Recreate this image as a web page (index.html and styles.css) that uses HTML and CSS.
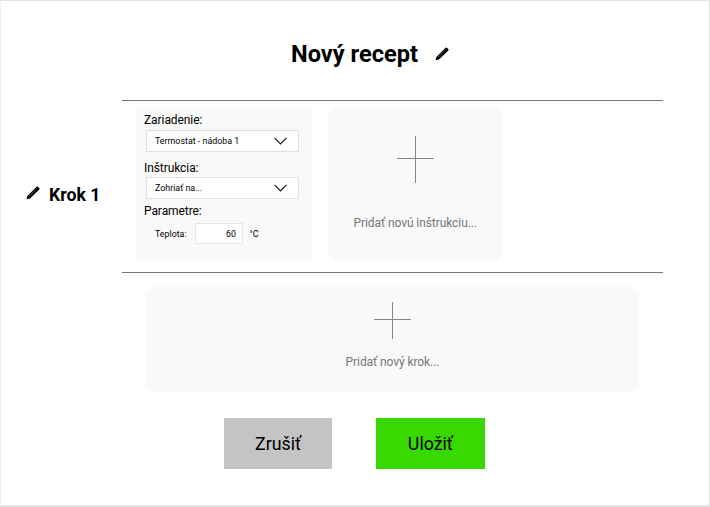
FILE: index.html
```html
<!DOCTYPE html>
<html lang="sk">
<head>
<meta charset="utf-8">
<title>Nový recept</title>
<link rel="stylesheet" href="styles.css">
</head>
<body>
<svg width="0" height="0" class="defs">
  <symbol id="pencil" viewBox="0 0 14 14">
    <path d="M.6 13.3 1.3 9.9 9.8 1.5 10.7.7Q11.3.2 11.9.7L13.3 2.1Q13.8 2.7 13.3 3.3L12.5 4.2 4 12.6Z"/>
    <path d="M3 10.2 10.6 2.7" stroke="#777" stroke-width=".7"/>
  </symbol>
  <symbol id="chevron" viewBox="0 0 13 8">
    <path d="M.5.8 6.5 6.9 12.5.8" fill="none" stroke="#111" stroke-width="1.15"/>
  </symbol>
</svg>
<main class="screen">
  <header class="title">
    <h1>Nový recept</h1>
    <svg class="pencil"><use href="#pencil"/></svg>
  </header>
  <section class="step">
    <div class="step-name">
      <svg class="pencil"><use href="#pencil"/></svg>
      <h2>Krok 1</h2>
    </div>
    <div class="step-body">
      <div class="panel">
        <div class="label">Zariadenie:</div>
        <div class="select"><span>Termostat - nádoba 1</span><svg class="chevron"><use href="#chevron"/></svg></div>
        <div class="label label-next">Inštrukcia:</div>
        <div class="select"><span>Zohriať na...</span><svg class="chevron"><use href="#chevron"/></svg></div>
        <div class="label label-params">Parametre:</div>
        <div class="param"><span class="param-name">Teplota:</span><span class="value">60</span><span>°C</span></div>
      </div>
      <div class="add add-instruction">
        <svg width="37" height="47" viewBox="0 0 37 47"><path d="M18.5 0V47M0 22.5H37"/></svg>
        <span>Pridať novú inštrukciu...</span>
      </div>
    </div>
  </section>
  <div class="add add-step">
    <svg width="37" height="37" viewBox="0 0 37 37"><path d="M18.5 0V37M0 17.5H37"/></svg>
    <span>Pridať nový krok...</span>
  </div>
  <footer class="actions">
    <button class="cancel">Zrušiť</button>
    <button class="save">Uložiť</button>
  </footer>
</main>
</body>
</html>
```

FILE: styles.css
```css
* { box-sizing: border-box; }
body { margin: 0; background: #fff; font-family: Roboto, "Liberation Sans", sans-serif; color: #000; }
.defs { display: block; }
.screen { height: 507px; border: 1px solid #e2e2e2; border-left-color: #efefef; border-bottom-width: 2px; padding-top: 37px; }
.title { display: flex; align-items: center; height: 32px; padding-left: 290px; gap: 17px; }
h1, h2 { margin: 0; font-weight: 700; white-space: nowrap; }
h1 { font-size: 23.6px; line-height: 32px; }
h2 { font-size: 17.7px; line-height: 24px; }
.pencil { width: 14px; height: 14px; flex: none; }
.step { display: flex; margin-top: 30px; height: 173px; }
.step-name { width: 121px; display: flex; align-items: center; gap: 9px; padding: 17px 0 0 25px; }
.step-name .pencil { margin-top: -5px; }
.step-body { width: 541px; display: flex; gap: 15.5px; padding: 7px 0 0 14px; border-top: 1px solid #777; border-bottom: 1px solid #777; }
.panel { width: 176px; height: 152px; background: #f9f9f9; padding: 4px 8px 0; }
.label { font-size: 12px; letter-spacing: -.08px; line-height: 16px; height: 18px; }
.label-next { line-height: 18px; }
.select { width: 153px; height: 22px; margin: 0 0 7px 2px; padding: 0 11px 0 8px; border: 1px solid #dfdfdf; background: #fff; display: flex; align-items: center; justify-content: space-between; font-size: 8.9px; }
.chevron { width: 13px; height: 8px; }
.label-params { margin-top: -3px; height: 20px; }
.param { display: flex; align-items: center; height: 21px; padding-left: 11px; font-size: 8.85px; }
.param-name { width: 39.5px; }
.value { width: 48px; height: 21px; line-height: 20px; margin-right: 7px; padding-right: 5.5px; text-align: right; border: 1px solid #e6e6e6; background: #fff; }
.add { display: flex; flex-direction: column; align-items: center; background: #f9f9f9; border-radius: 9px; font-size: 12px; letter-spacing: -.08px; line-height: 16px; color: #777; }
.add path { stroke: #858585; stroke-width: 1; fill: none; }
.add-instruction { width: 175.5px; height: 152px; padding-top: 28px; gap: 32px; }
.add-step { width: 493px; height: 105px; margin: 14px 0 0 145px; padding-top: 15px; gap: 15px; }
.actions { display: flex; gap: 44px; margin: 26px 0 0 223px; }
button { width: 108.3px; height: 51px; border: 0; padding: 0; font: 17.8px/51px Roboto, "Liberation Sans", sans-serif; color: #000; }
.cancel { background: #c4c4c4; }
.save { background: #37d900; }
```
